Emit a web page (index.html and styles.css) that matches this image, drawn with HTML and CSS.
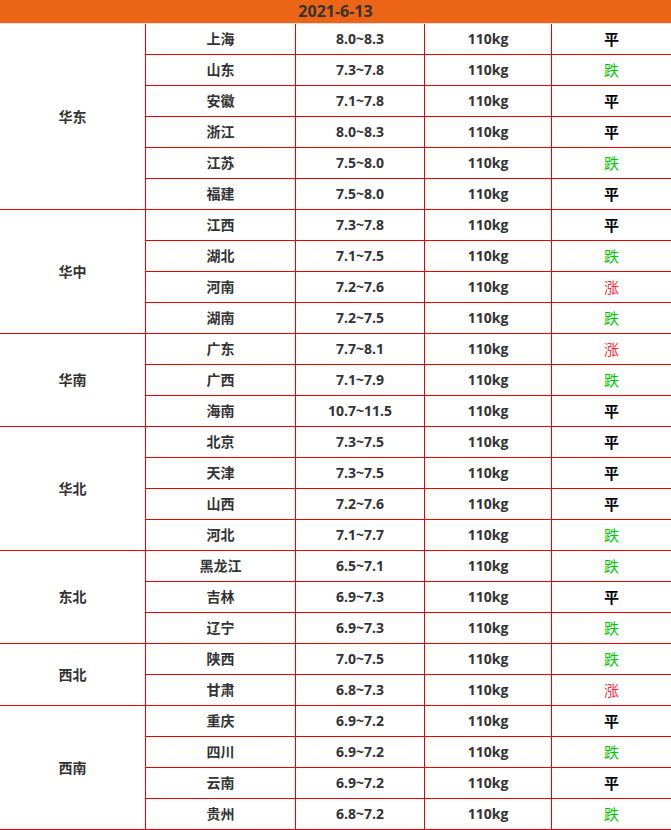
FILE: index.html
```html
<!DOCTYPE html>
<html lang="zh">
<head>
<meta charset="utf-8">
<title>2021-6-13</title>
<link rel="stylesheet" href="styles.css">
</head>
<body>
<div class="head">2021-6-13</div>
<div class="grid">
  <div class="c region r6">华东</div>
  <div class="c">上海</div><div class="c">8.0~8.3</div><div class="c">110kg</div><div class="c s flat">平</div>
  <div class="c">山东</div><div class="c">7.3~7.8</div><div class="c">110kg</div><div class="c s down">跌</div>
  <div class="c">安徽</div><div class="c">7.1~7.8</div><div class="c">110kg</div><div class="c s flat">平</div>
  <div class="c">浙江</div><div class="c">8.0~8.3</div><div class="c">110kg</div><div class="c s flat">平</div>
  <div class="c">江苏</div><div class="c">7.5~8.0</div><div class="c">110kg</div><div class="c s down">跌</div>
  <div class="c">福建</div><div class="c">7.5~8.0</div><div class="c">110kg</div><div class="c s flat">平</div>

  <div class="c region r4">华中</div>
  <div class="c">江西</div><div class="c">7.3~7.8</div><div class="c">110kg</div><div class="c s flat">平</div>
  <div class="c">湖北</div><div class="c">7.1~7.5</div><div class="c">110kg</div><div class="c s down">跌</div>
  <div class="c">河南</div><div class="c">7.2~7.6</div><div class="c">110kg</div><div class="c s up">涨</div>
  <div class="c">湖南</div><div class="c">7.2~7.5</div><div class="c">110kg</div><div class="c s down">跌</div>

  <div class="c region r3">华南</div>
  <div class="c">广东</div><div class="c">7.7~8.1</div><div class="c">110kg</div><div class="c s up">涨</div>
  <div class="c">广西</div><div class="c">7.1~7.9</div><div class="c">110kg</div><div class="c s down">跌</div>
  <div class="c">海南</div><div class="c">10.7~11.5</div><div class="c">110kg</div><div class="c s flat">平</div>

  <div class="c region r4">华北</div>
  <div class="c">北京</div><div class="c">7.3~7.5</div><div class="c">110kg</div><div class="c s flat">平</div>
  <div class="c">天津</div><div class="c">7.3~7.5</div><div class="c">110kg</div><div class="c s flat">平</div>
  <div class="c">山西</div><div class="c">7.2~7.6</div><div class="c">110kg</div><div class="c s flat">平</div>
  <div class="c">河北</div><div class="c">7.1~7.7</div><div class="c">110kg</div><div class="c s down">跌</div>

  <div class="c region r3">东北</div>
  <div class="c">黑龙江</div><div class="c">6.5~7.1</div><div class="c">110kg</div><div class="c s down">跌</div>
  <div class="c">吉林</div><div class="c">6.9~7.3</div><div class="c">110kg</div><div class="c s flat">平</div>
  <div class="c">辽宁</div><div class="c">6.9~7.3</div><div class="c">110kg</div><div class="c s down">跌</div>

  <div class="c region r2">西北</div>
  <div class="c">陕西</div><div class="c">7.0~7.5</div><div class="c">110kg</div><div class="c s down">跌</div>
  <div class="c">甘肃</div><div class="c">6.8~7.3</div><div class="c">110kg</div><div class="c s up">涨</div>

  <div class="c region r4">西南</div>
  <div class="c">重庆</div><div class="c">6.9~7.2</div><div class="c">110kg</div><div class="c s flat">平</div>
  <div class="c">四川</div><div class="c">6.9~7.2</div><div class="c">110kg</div><div class="c s down">跌</div>
  <div class="c">云南</div><div class="c">6.9~7.2</div><div class="c">110kg</div><div class="c s flat">平</div>
  <div class="c">贵州</div><div class="c">6.8~7.2</div><div class="c">110kg</div><div class="c s down">跌</div>
</div>
</body>
</html>
```
FILE: styles.css
```css
html, body {
  margin: 0;
  padding: 0;
  background: #fff;
}
body {
  font-family: "Open Sans", "Noto Sans CJK SC", sans-serif;
  font-weight: 700;
  color: #333;
  width: 671px;
}
.head {
  height: 23px;
  background: #ec6415;
  border-bottom: 1px solid #dcdcdc;
  color: #333;
  font-size: 16px;
  line-height: 23px;
  text-align: center;
}
.grid {
  display: grid;
  grid-template-columns: 146px 150px 129px 127px 1fr;
  grid-auto-rows: 31px;
}
.c {
  box-sizing: border-box;
  border-right: 1px solid #ee0000;
  border-bottom: 1px solid #ee0000;
  display: flex;
  align-items: center;
  justify-content: center;
  font-size: 14px;
  padding-bottom: 2px;
}
.c.s {
  border-right: none;
  font-size: 15px;
}
.region { grid-column: 1; }
.r2 { grid-row: span 2; }
.r3 { grid-row: span 3; }
.r4 { grid-row: span 4; }
.r6 { grid-row: span 6; }
.flat { color: #000; }
.down { color: #00c800; font-weight: 400; }
.up { color: #ff2d3c; font-weight: 400; }
```
